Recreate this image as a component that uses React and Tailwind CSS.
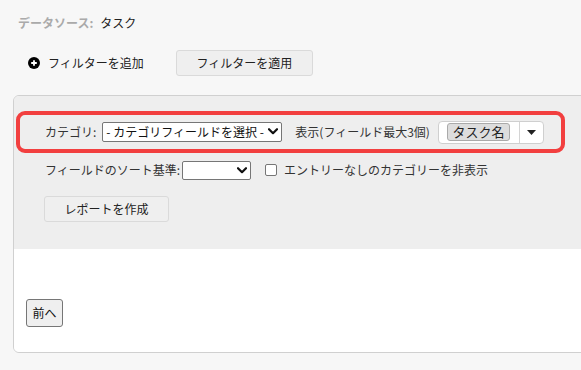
import React from "react";

function Chevron({ className = "" }) {
  return (
    <svg viewBox="0 0 10 7" className={className} width="10" height="7">
      <path d="M1 1.2 L5 5.2 L9 1.2" fill="none" stroke="#111" strokeWidth="2.2" strokeLinecap="round" strokeLinejoin="round" />
    </svg>
  );
}

function App() {
  return (
    <div className="h-[370px] w-[581px] overflow-hidden bg-[#f7f7f7] font-['Noto_Sans_CJK_JP',sans-serif] text-[12px] text-[#333]">
      {/* Data source */}
      <div className="flex h-[18px] items-center pl-[18px] mt-[14px]">
        <span className="font-bold text-[#aaa]">データソース:</span>
        <span className="ml-[7px] text-[#222]">タスク</span>
      </div>

      {/* Filters */}
      <div className="mt-[18px] flex h-[26px] items-center pl-[28px]">
        <span className="flex h-[12px] w-[12px] items-center justify-center rounded-full bg-black">
          <svg viewBox="0 0 12 12" width="12" height="12">
            <path d="M6 3.2 V8.8 M3.2 6 H8.8" stroke="#fff" strokeWidth="1.8" />
          </svg>
        </span>
        <span className="ml-[8px] text-[#222]">フィルターを追加</span>
        <button className="ml-[32px] h-[26px] w-[137px] rounded-[3px] border border-[#dadada] bg-[#efefef] text-[#222]">
          フィルターを適用
        </button>
      </div>

      {/* Panel */}
      <div className="ml-[13px] mt-[19px] w-[640px] overflow-hidden rounded-[6px] border border-[#d0d0d0]">
        <div className="h-[153px] bg-[#eeeeee] pt-[15px]">
          {/* Highlighted row */}
          <div className="ml-[2px] flex h-[42px] w-[549px] items-center rounded-[9px] border-[4px] border-[#f23f3f] pl-[25px]">
            <span>カテゴリ:</span>
            <div className="relative ml-[6px] h-[20px] w-[180px]">
              <select className="h-full w-full appearance-none rounded-[2px] border border-[#767676] bg-white pl-[3px] text-[12px] text-[#111]">
                <option>- カテゴリフィールドを選択 -</option>
              </select>
              <Chevron className="pointer-events-none absolute right-[4px] top-[6px]" />
            </div>
            <span className="ml-[13px]">表示(フィールド最大3個)</span>
            <div className="ml-[8px] flex h-[23px] w-[106px] items-center rounded-[4px] border border-[#cfcfcf] bg-white">
              <span className="ml-[8px] flex h-[18px] w-[63px] items-center justify-center rounded-[3px] border border-[#aaa] bg-[#dddddd] text-[13px] text-[#222]">
                タスク名
              </span>
              <span className="ml-[9px] h-full w-px bg-[#d4d4d4]" />
              <svg viewBox="0 0 9 5" width="9" height="5" className="ml-[7px]">
                <path d="M0 0 H9 L4.5 5 Z" fill="#222" />
              </svg>
            </div>
          </div>

          {/* Sort row */}
          <div className="mt-[7px] flex h-[20px] items-center pl-[31px]">
            <span>フィールドのソート基準:</span>
            <div className="relative ml-[2px] h-[19px] w-[69px]">
              <select className="h-full w-full appearance-none rounded-[2px] border border-[#767676] bg-white"></select>
              <Chevron className="pointer-events-none absolute right-[4px] top-[6px]" />
            </div>
            <input
              type="checkbox"
              className="ml-[14px] h-[12px] w-[12px] appearance-none rounded-[2px] border border-[#767676] bg-white"
            />
            <span className="ml-[7px]">エントリーなしのカテゴリーを非表示</span>
          </div>

          <button className="ml-[30px] mt-[16px] h-[26px] w-[125px] rounded-[3px] border border-[#dadada] bg-[#efefef] text-[#222]">
            レポートを作成
          </button>
        </div>

        <div className="h-[103px] bg-white pl-[12px] pt-[50px]">
          <button className="h-[28px] w-[37px] rounded-[3px] border border-[#767676] bg-[#efefef] text-[12px] text-[#111]">
            前へ
          </button>
        </div>
      </div>
    </div>
  );
}

export default App;
